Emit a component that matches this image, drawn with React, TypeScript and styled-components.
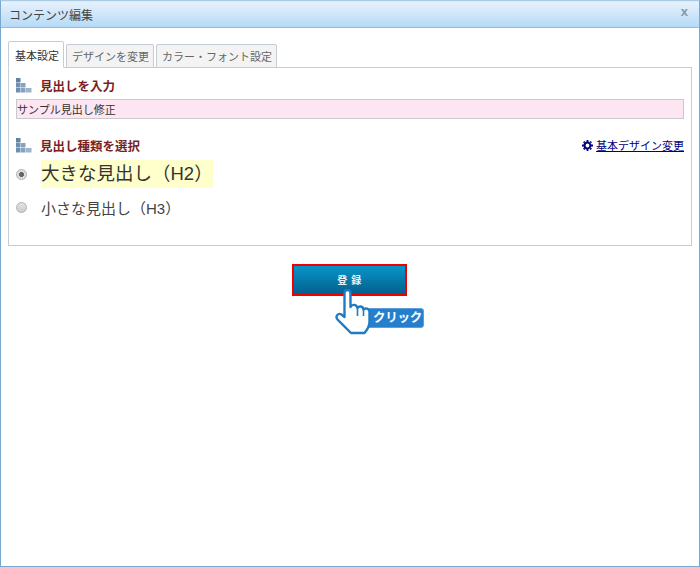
import React from "react";
import styled, { createGlobalStyle } from "styled-components";

const Global = createGlobalStyle`
  html, body { margin: 0; padding: 0; background: #fff; }
  body { font-family: "Liberation Sans", "Noto Sans CJK JP", sans-serif; color: #333; }
  * { box-sizing: border-box; }
`;

const Bars = () => (
  <BarsSvg viewBox="0 0 16 15" width="16" height="15">
    <rect x="0" y="0" width="4.500" height="4.500" fill="#5f82a6" />
    <rect x="0" y="5" width="4.500" height="4.500" fill="#6f8fb0" />
    <rect x="5" y="5" width="4.500" height="4.500" fill="#86a2bf" />
    <rect x="0" y="10" width="4.500" height="4.500" fill="#6f8fb0" />
    <rect x="5" y="10" width="4.500" height="4.500" fill="#86a2bf" />
    <rect x="10" y="10" width="5.500" height="4.500" fill="#9db4cb" />
  </BarsSvg>
);

const Gear = () => (
  <svg viewBox="0 0 12 12" width="11" height="11">
    <circle cx="6" cy="6" r="3.2" fill="none" stroke="#000080" strokeWidth="2.2" />
    <g stroke="#000080" strokeWidth="2">
      <line x1="6" y1="0" x2="6" y2="12" strokeDasharray="2.2 7.6" />
      <line x1="0" y1="6" x2="12" y2="6" strokeDasharray="2.2 7.6" />
      <line x1="1.8" y1="1.8" x2="10.2" y2="10.2" strokeDasharray="1.6 8.6" />
      <line x1="10.2" y1="1.8" x2="1.8" y2="10.2" strokeDasharray="1.6 8.6" />
    </g>
  </svg>
);

const Hand = () => (
  <HandSvg viewBox="0 0 40 48" width="40" height="48">
    <path
      d="M9.500 4 C9.500 0 15.500 0 15.500 4 L15.500 18 C17 15 21.500 15 22.500 19 C24 16.500 28 17 28.500 20.500 C30 18.500 34.500 19.500 34.500 23 L34.500 33 C34.500 38 32 41 29.500 44 L16 44 C12 40 7 35 2.500 30.500 C0 27.500 3 23.500 6.500 25.500 L9.500 28 Z"
      fill="#fff"
      stroke="#1f7cc4"
      strokeWidth="2.4"
      strokeLinejoin="round"
    />
    <path d="M22.500 19 L22.500 27 M28.500 20.500 L28.500 27" stroke="#1f7cc4" strokeWidth="1.600" fill="none" />
  </HandSvg>
);

export default function App() {
  return (
    <>
      <Global />
      <Frame>
        <TitleBar>
          <Title>コンテンツ編集</Title>
          <Close>x</Close>
        </TitleBar>
        <Body>
          <Tabs>
            <Tab $active>基本設定</Tab>
            <Tab>デザインを変更</Tab>
            <Tab>カラー・フォント設定</Tab>
          </Tabs>
          <Panel>
            <SectionHead>
              <Bars />
              <SectionTitle>見出しを入力</SectionTitle>
            </SectionHead>
            <TextField defaultValue="サンプル見出し修正" />
            <SecondHead>
              <Bars />
              <SectionTitle>見出し種類を選択</SectionTitle>
              <DesignLink>
                <Gear />
                <LinkText>基本デザイン変更</LinkText>
              </DesignLink>
            </SecondHead>
            <Option>
              <Radio $checked />
              <BigLabel>大きな見出し（H2）</BigLabel>
            </Option>
            <SmallOption>
              <Radio />
              <SmallLabel>小さな見出し（H3）</SmallLabel>
            </SmallOption>
          </Panel>
          <Actions>
            <Submit>
              <SubmitLabel>登 録</SubmitLabel>
              <ClickBadge>クリック</ClickBadge>
              <Hand />
            </Submit>
          </Actions>
        </Body>
      </Frame>
    </>
  );
}

const Frame = styled.div`
  width: 700px;
  height: 567px;
  border: 1px solid #76a8d0;
  border-top-color: #a9cbe4;
  display: flex;
  flex-direction: column;
  overflow: hidden;
`;

const TitleBar = styled.div`
  height: 27px;
  flex: none;
  display: flex;
  align-items: center;
  justify-content: space-between;
  padding: 0 11px 0 8px;
  background: linear-gradient(#e6f2fc, #b5daf7);
  border-top: 1px solid #d9ebf8;
  border-bottom: 1px solid #9db8d0;
`;

const Title = styled.div`
  font-size: 12px;
  color: #444;
`;

const Close = styled.div`
  font-size: 13px;
  font-weight: bold;
  color: #8a97a3;
  line-height: 12px;
  padding-bottom: 6px;
`;

const Body = styled.div`
  flex: 1;
  padding: 13px 7px 0 7px;
`;

const Tabs = styled.div`
  display: flex;
  align-items: flex-end;
  gap: 2px;
  height: 27px;
  position: relative;
  z-index: 1;
  margin-bottom: -1px;
`;

const Tab = styled.div<{ $active?: boolean }>`
  height: ${(p) => (p.$active ? "27px" : "24px")};
  padding: ${(p) => (p.$active ? "0 4px 0 6px" : "0 4px 0 5px")};
  display: flex;
  align-items: center;
  font-size: 11px;
  color: ${(p) => (p.$active ? "#333" : "#666")};
  background: ${(p) => (p.$active ? "#fff" : "#f3f3f3")};
  border: 1px solid #c5ccd3;
  border-top-color: ${(p) => (p.$active ? "#b5d3ea" : "#c5ccd3")};
  border-bottom-color: ${(p) => (p.$active ? "#fff" : "#c5ccd3")};
  border-radius: 2px 2px 0 0;
`;

const Panel = styled.div`
  height: 179px;
  border: 1px solid #c5ccd3;
  padding: 8px 7px 0 7px;
  background: #fff;
`;

const SectionHead = styled.div`
  display: flex;
  align-items: center;
  height: 18px;
`;

const SecondHead = styled(SectionHead)`
  margin-top: 17px;
`;

const BarsSvg = styled.svg`
  flex: none;
  margin-right: 8px;
`;

const SectionTitle = styled.div`
  font-size: 12.500px;
  font-weight: bold;
  color: #7a1f24;
`;

const TextField = styled.input`
  display: block;
  width: 668px;
  height: 20px;
  margin-top: 5px;
  padding: 0;
  border: 1px solid #c9c9c9;
  background: #fde6f2;
  font-family: inherit;
  font-size: 11px;
  color: #333;
  outline: none;
`;

const DesignLink = styled.a`
  margin-left: auto;
  display: flex;
  align-items: center;
  gap: 3px;
  color: #000080;
  font-size: 11px;
`;

const LinkText = styled.span`
  text-decoration: underline;
`;

const Option = styled.div`
  display: flex;
  align-items: center;
  height: 28px;
  margin-top: 6px;
`;

const SmallOption = styled(Option)`
  margin-top: 6px;
  height: 26px;
`;

const Radio = styled.span<{ $checked?: boolean }>`
  width: 11px;
  height: 11px;
  flex: none;
  margin-right: 14px;
  border-radius: 50%;
  border: 1px solid #b0b0b0;
  background: ${(p) =>
    p.$checked
      ? "radial-gradient(circle, #666 0 2.2px, #ddd 2.8px)"
      : "linear-gradient(#e4e4e4, #ccc)"};
`;

const BigLabel = styled.div`
  height: 28px;
  line-height: 28px;
  width: 172px;
  background: #ffffcc;
  font-size: 18.500px;
  color: #333;
  white-space: nowrap;
`;

const SmallLabel = styled.div`
  font-size: 15px;
  color: #444;
  white-space: nowrap;
`;

const Actions = styled.div`
  display: flex;
  justify-content: center;
  margin-top: 18px;
  padding-right: 1px;
`;

const Submit = styled.div`
  position: relative;
  width: 115px;
  height: 32px;
  display: flex;
  align-items: center;
  justify-content: center;
  border: 2px solid #f00000;
  background: linear-gradient(#0796c8, #045f8e);
  color: #e8f4fa;
  font-size: 10px;
  font-weight: bold;
  letter-spacing: 0.5px;
`;

const SubmitLabel = styled.span`
  padding-bottom: 2px;
`;

const HandSvg = styled.svg`
  position: absolute;
  left: 41px;
  top: 23px;
`;

const ClickBadge = styled.span`
  position: absolute;
  left: 72px;
  top: 42px;
  width: 58px;
  height: 20px;
  background: #2480cc;
  border: 1px solid #5d9fd8;
  border-radius: 3px;
  color: #fff;
  font-size: 12.500px;
  font-weight: bold;
  line-height: 18px;
  padding-left: 5px;
  text-align: center;
  letter-spacing: -0.3px;
`;
